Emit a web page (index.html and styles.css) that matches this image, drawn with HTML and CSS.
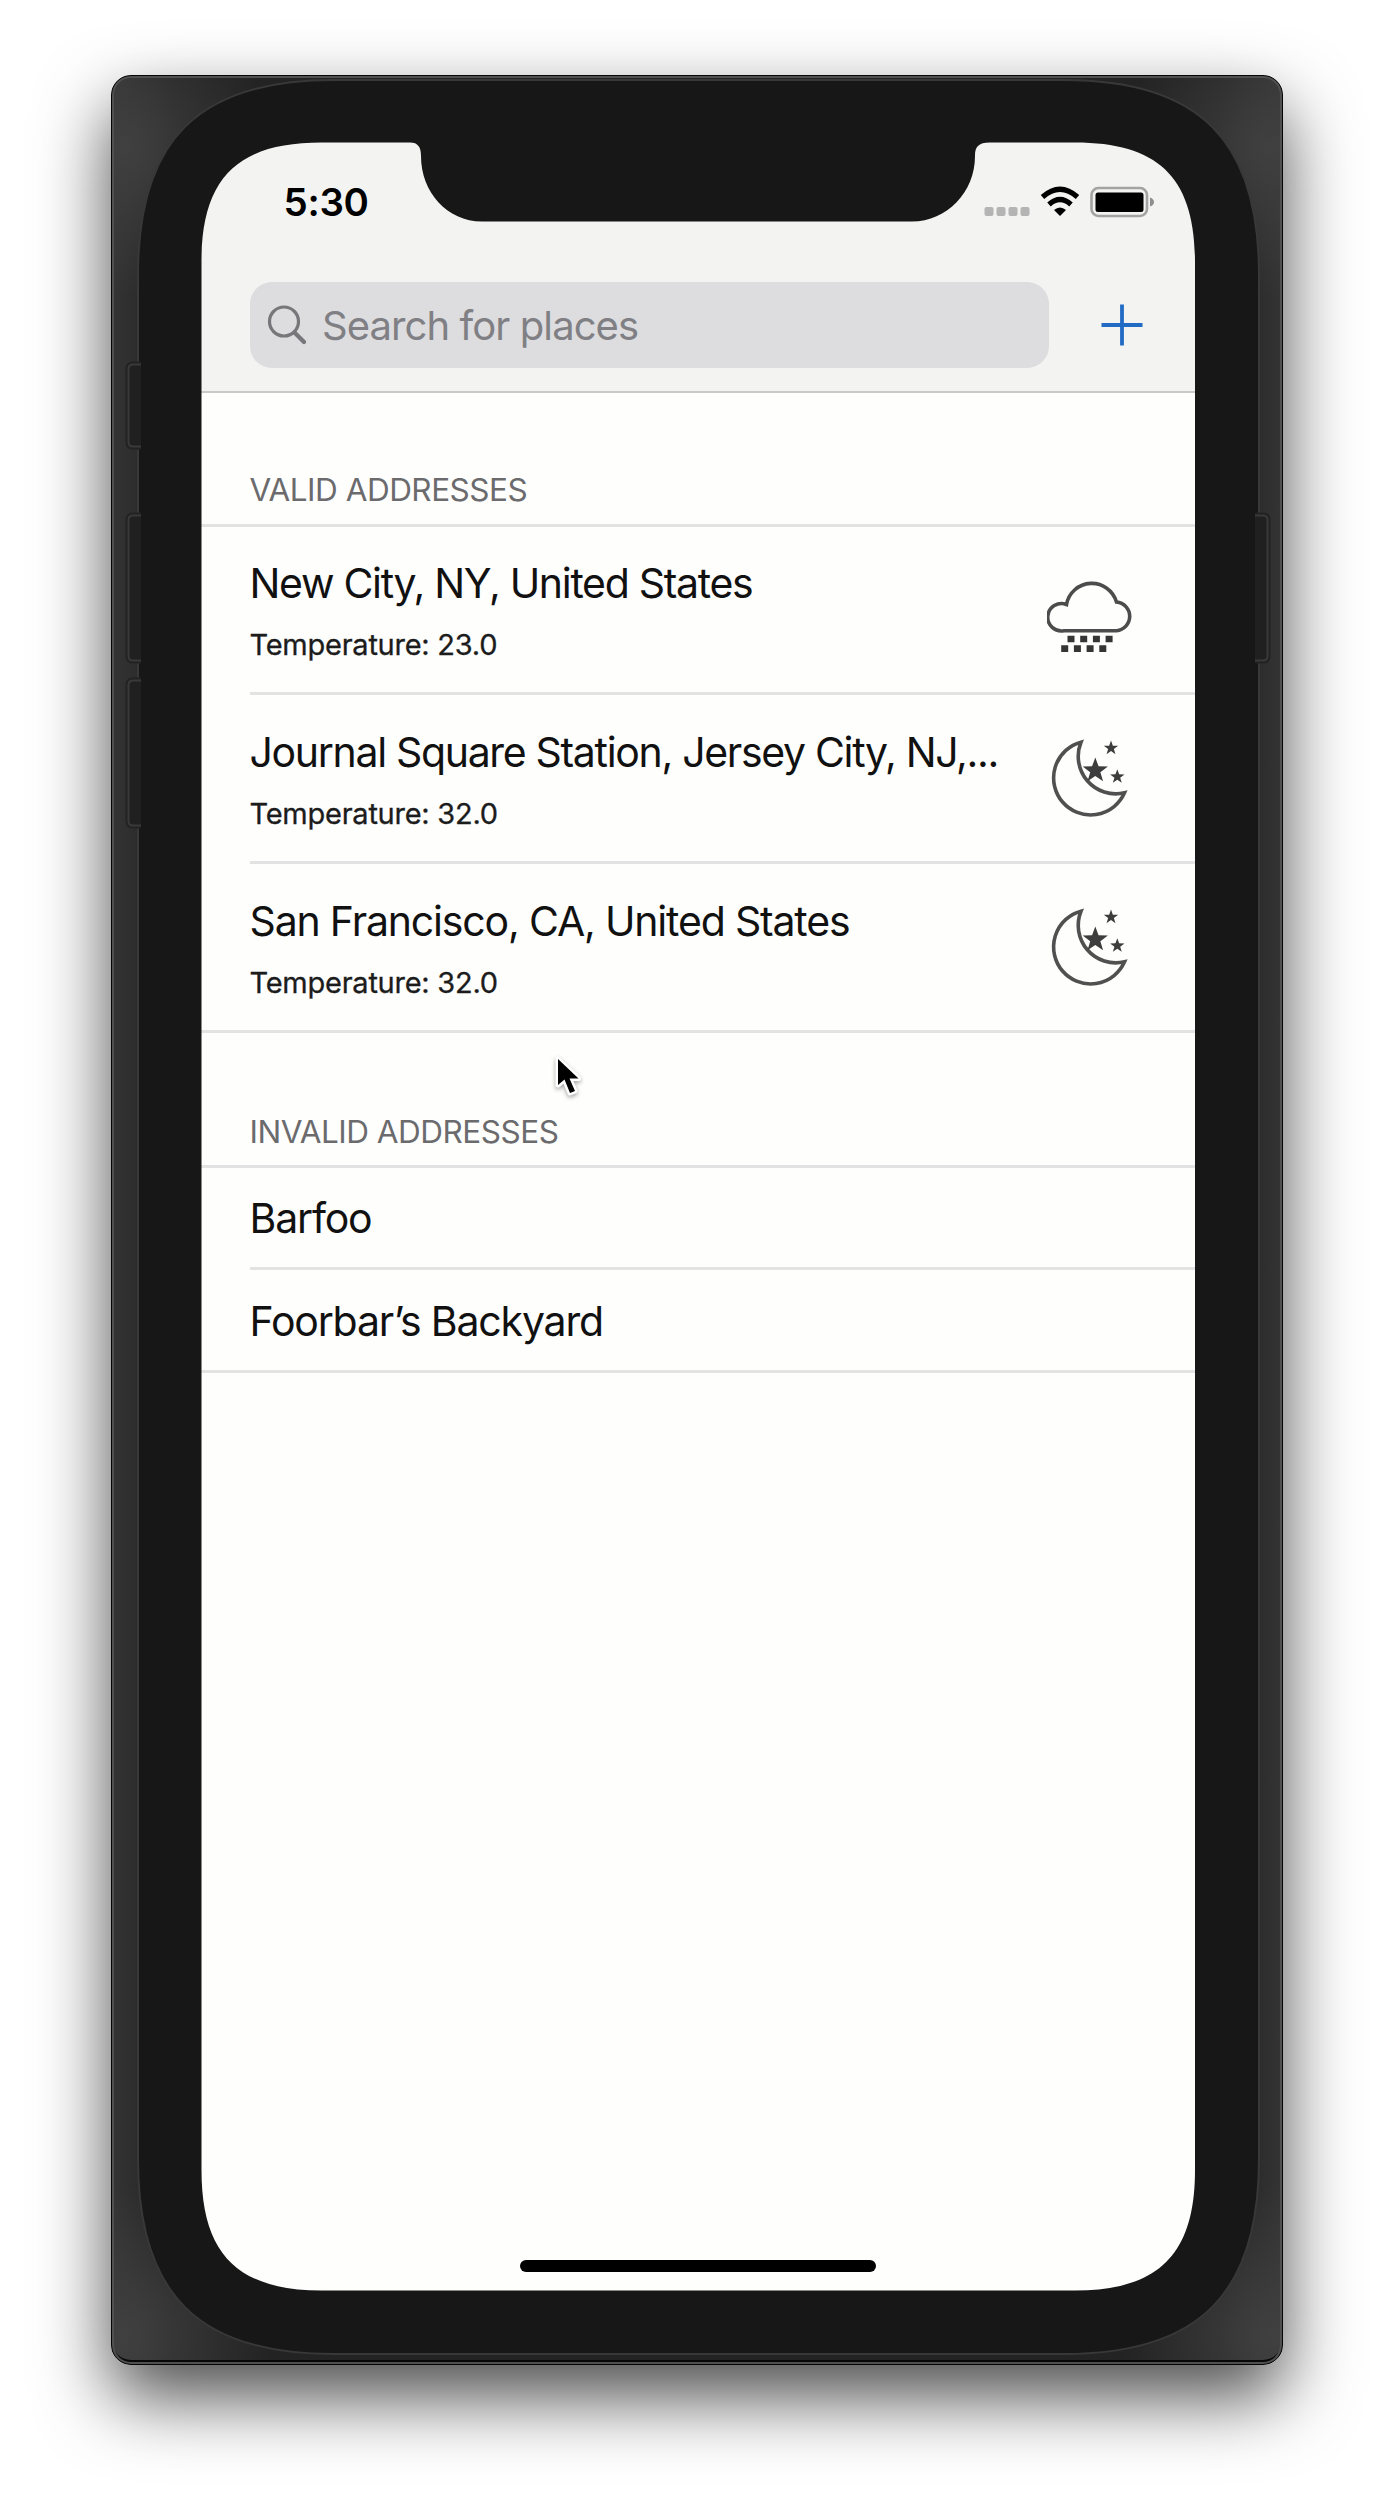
FILE: index.html
```
<!DOCTYPE html>
<html lang="en">
<head>
<meta charset="utf-8">
<title>Places</title>
<link rel="stylesheet" href="styles.css">
</head>
<body>
<svg class="defs" width="0" height="0" aria-hidden="true">
  <defs>
    <path id="star" d="M0 -10L2.500 -3.200L9.700 -3.100L3.900 1.300L6 8.300L0 4.200L-6 8.300L-3.900 1.300L-9.700 -3.100L-2.500 -3.200Z"/>
    <symbol id="night" viewBox="0 0 88 84">
      <path d="M34 7.200A37 37 0 1 0 77.500 57.800A37.500 37.500 0 0 1 34 7.200Z" fill="none" stroke="#505050" stroke-width="3.600"/>
      <g fill="#3d3d3d">
        <use href="#star" transform="translate(48.300 35.500) scale(1.300)"/>
        <use href="#star" transform="translate(64 13) scale(.74)"/>
        <use href="#star" transform="translate(70.300 41.700) scale(.74)"/>
      </g>
    </symbol>
    <g id="buttons">
      <path d="M141 364.500H133Q128.500 364.500 128.500 369V442Q128.500 446.500 133 446.500H141"/>
      <path d="M141 515.500H133Q128.500 515.500 128.500 520V656Q128.500 660.500 133 660.500H141"/>
      <path d="M141 680.500H133Q128.500 680.500 128.500 685V821Q128.500 825.500 133 825.500H141"/>
      <path d="M1255 515.500H1263Q1267.500 515.500 1267.500 520V656Q1267.500 660.500 1263 660.500H1255"/>
    </g>
  </defs>
</svg>
<div class="window">
  <main class="screen">
    <header class="header">
      <div class="status">
        <span class="clock">5:30</span>
        <svg class="indicators" width="172" height="34" viewBox="983 185 172 34">
          <g fill="#b4b4b4"><rect x="984.500" y="207" width="9" height="9" rx="2"/><rect x="996.500" y="207" width="9" height="9" rx="2"/><rect x="1008.500" y="207" width="9" height="9" rx="2"/><rect x="1020.500" y="207" width="9" height="9" rx="2"/></g>
          <path d="M1042.500 197Q1060 181.500 1077.500 197M1049 204.500Q1060 194.500 1071 204.500" fill="none" stroke="#000" stroke-width="5.200"/>
          <path d="M1054 210Q1060 205 1066 210L1060 216Z"/>
          <rect x="1091.500" y="188" width="55.500" height="28" rx="7" fill="none" stroke="#a3a3a3" stroke-width="2.600"/>
          <rect x="1095.500" y="192.500" width="48" height="19.500" rx="2.500"/>
          <path d="M1150 197.500Q1154 199 1154 202T1150 206.500Z" fill="#8f8f8f"/>
        </svg>
      </div>
      <div class="toolbar">
        <div class="search">
          <svg width="42" height="42" viewBox="0 0 42 42" fill="none" stroke="#77777b"><circle cx="18" cy="17.500" r="14.500" stroke-width="3.200"/><path d="M28.500 28.500 38 38" stroke-width="4.200" stroke-linecap="round"/></svg>
          <span class="placeholder">Search for places</span>
        </div>
        <svg class="add" width="42" height="42" viewBox="0 0 42 42"><path d="M21 .5V41.500M.5 21H41.500" stroke="#226bc4" stroke-width="3.800"/></svg>
      </div>
    </header>
    <section>
      <h2 class="heading valid">VALID ADDRESSES</h2>
      <ul class="list">
        <li class="row tall first">
          <div class="text"><p class="title t1">New City, NY, United States</p><p class="detail">Temperature: 23.0</p></div>
          <svg class="icon rain" width="88" height="84" viewBox="0 0 88 84">
            <path d="M17 54.700A13.700 13.700 0 1 1 19.500 28.500A25.700 25.700 0 0 1 69.500 26A14.400 14.400 0 0 1 69.500 54.700Z" fill="none" stroke="#4c4c4c" stroke-width="3.600"/>
            <path d="M20.500 63h7m5.700 0h7m5.700 0h7m5.700 0h7M14.200 72.600h7m5.700 0h7m5.700 0h7m5.700 0h7" stroke="#353535" stroke-width="6.600"/>
          </svg>
        </li>
        <li class="row tall">
          <div class="text"><p class="title t2">Journal Square Station, Jersey City, NJ,...</p><p class="detail">Temperature: 32.0</p></div>
          <svg class="icon" width="88" height="84"><use href="#night" width="88" height="84"/></svg>
        </li>
        <li class="row tall">
          <div class="text"><p class="title">San Francisco, CA, United States</p><p class="detail">Temperature: 32.0</p></div>
          <svg class="icon" width="88" height="84"><use href="#night" width="88" height="84"/></svg>
        </li>
      </ul>
    </section>
    <section>
      <h2 class="heading invalid">INVALID ADDRESSES</h2>
      <ul class="list">
        <li class="row"><p class="title">Barfoo</p></li>
        <li class="row"><p class="title">Foorbar’s Backyard</p></li>
      </ul>
    </section>
    <div class="home"></div>
  </main>
  <svg class="bezel" viewBox="111 75 1172 2290" width="1172" height="2290">
    <path fill="#171717" fill-rule="evenodd" d="M138 275C138 140 198 80 333 80H1064C1199 80 1259 140 1259 275V2159C1259 2294 1199 2354 1064 2354H333C198 2354 138 2294 138 2159ZM201.500 262V2170C201.500 2254 237.500 2290.500 321.500 2290.500H1075C1159 2290.500 1195 2254 1195 2170V262C1195 178 1159 142.500 1075 142.500H990C978 142.500 975 147 975 156C975 192 947 221.500 912 221.500H482C447 221.500 421 192 421 156C421 147 418 142.500 410 142.500H321.500C237.500 142.500 201.500 178 201.500 262Z"/>
    <path fill="none" stroke="#383838" stroke-width="2" d="M138 275C138 140 198 80 333 80H1064C1199 80 1259 140 1259 275V2159C1259 2294 1199 2354 1064 2354H333C198 2354 138 2294 138 2159Z"/>
    <use href="#buttons" fill="#202020" stroke="#222" stroke-width="6"/>
    <use href="#buttons" fill="#202020" stroke="#393939" stroke-width="2"/>
  </svg>
  <svg class="pointer" width="32" height="48" viewBox="0 0 32 48"><path d="M5 4V30L11.500 24.500 17 38 22 36 16.500 23.500H25.500Z" fill="#000" stroke="#fff" stroke-width="5" stroke-linejoin="round" paint-order="stroke"/></svg>
</div>
</body>
</html>
```
FILE: styles.css
```
* { box-sizing: border-box; }
body {
  margin: 0;
  height: 2512px;
  padding: 75px 111px 0;
  background: #fff;
  font-family: Inter, "Liberation Sans", sans-serif;
  color: #111;
  overflow: hidden;
}
h2, p, ul { margin: 0; padding: 0; font-weight: 400; white-space: nowrap; }
ul { list-style: none; }
.defs { position: absolute; }
.window {
  position: relative;
  width: 1172px;
  height: 2290px;
  padding: 66px 87px 0 89px;
  border: 1px solid #050505;
  border-radius: 20px;
  background:
    radial-gradient(circle at 10px 70px, #404040, transparent 150px),
    radial-gradient(circle at 1160px 70px, #404040, transparent 150px),
    radial-gradient(circle at 10px 2260px, #404040, transparent 150px),
    radial-gradient(circle at 1160px 2260px, #404040, transparent 150px),
    linear-gradient(90deg, #343434, #2c2c2c 26px, #232323 60px, #232323 1110px, #2c2c2c 1145px, #343434);
  box-shadow: 0 32px 72px rgba(0, 0, 0, .7), inset 0 0 0 2px #505050, inset 0 -4px 0 #080808;
}
.screen {
  display: flex;
  flex-direction: column;
  width: 994px;
  height: 2149px;
  background: #fefefd;
}
.header { height: 251px; background: #f3f3f2; border-bottom: 2px solid #c9c9c9; }
.status { display: flex; justify-content: space-between; height: 140px; padding: 43px 40px 0 82.500px; }
.clock { font-size: 38.500px; line-height: 34px; font-weight: 600; letter-spacing: -.3px; color: #000; }
.toolbar { display: flex; align-items: center; padding: 0 52px 0 49px; justify-content: space-between; }
.search { display: flex; align-items: center; gap: 14px; width: 799px; height: 86px; padding: 0 16px; border-radius: 22px; background: #dddde0; }
.placeholder { font-size: 40px; letter-spacing: -.92px; color: #808084; }
.heading { border-bottom: 3px solid #e3e3e3; padding-left: 48.500px; font-size: 31.500px; line-height: 38px; color: #6b6b6e; letter-spacing: -.5px; }
.valid { height: 134px; padding-top: 78px; }
.invalid { height: 135px; padding-top: 80px; }
.list { border-bottom: 3px solid #e3e3e3; padding-left: 48.500px; }
.row { display: flex; justify-content: space-between; height: 102px; padding-top: 25px; border-bottom: 3px solid #e3e3e3; }
.row:last-child { height: 100px; padding-top: 26px; border-bottom: 0; }
.tall { height: 169px; padding: 32px 60px 0 0; }
.tall.first { height: 168px; padding-top: 31px; }
.tall:last-child { height: 166px; padding-top: 32px; }
.text { width: 0; }
.title { font-size: 41px; line-height: 50px; letter-spacing: -1.18px; }
.t1 { letter-spacing: -1.31px; }
.t2 { letter-spacing: -1.32px; }
.detail { margin-top: 19px; font-size: 29px; line-height: 36px; letter-spacing: -.25px; color: #1c1c1c; -webkit-text-stroke: .3px #1c1c1c; }
.icon { flex: none; margin-top: 8px; }
.rain { margin-top: 18px; }
.home { width: 356px; height: 12px; margin: auto auto 19px 319px; border-radius: 6px; background: #000; }
.bezel { position: absolute; left: -1px; top: -1px; }
.pointer { position: absolute; left: 441px; top: 979px; filter: drop-shadow(0 2px 2px rgba(0, 0, 0, .35)); }
```
